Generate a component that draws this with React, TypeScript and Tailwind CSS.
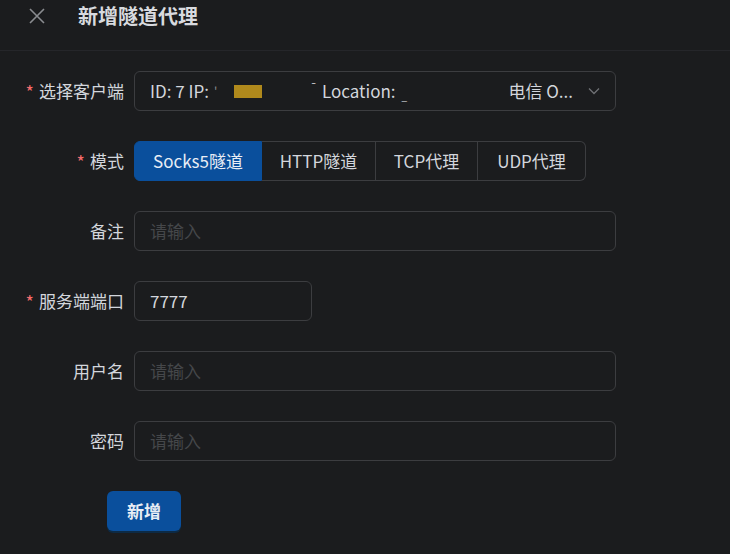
import React from "react";

const font = { fontFamily: '"Microsoft YaHei", "Noto Sans CJK SC", "Noto Sans", sans-serif' };

function Label({ text, required }: { text: string; required?: boolean }) {
  return (
    <div className="w-[134px] shrink-0 flex items-center justify-end pr-[10px] text-[17px] text-[#d3d6dc]">
      {required && <span className="text-[#f56c6c] mr-[5px] text-[18px]">*</span>}
      <span>{text}</span>
    </div>
  );
}

function Input({ placeholder, value, width }: { placeholder?: string; value?: string; width: string }) {
  return (
    <div className={`${width} h-[40px] rounded-[6px] border border-[#3c3d40] flex items-center px-[15px] text-[17px]`}>
      {value ? (
        <span className="text-[#d3d6dc]">{value}</span>
      ) : (
        <span className="text-[#45474a]">{placeholder}</span>
      )}
    </div>
  );
}

export default function App() {
  const modes = [
    { t: "Socks5隧道", w: "w-[128px]" },
    { t: "HTTP隧道", w: "w-[114px]" },
    { t: "TCP代理", w: "w-[102px]" },
    { t: "UDP代理", w: "w-[108px]" },
  ];
  return (
    <div className="w-[730px] h-[554px] bg-[#1b1c1e] overflow-hidden" style={font}>
      <div className="h-[51px] border-b border-[#25262a] flex items-start pt-[3px]">
        <svg width="18" height="18" viewBox="0 0 18 18" className="ml-[28px] mt-[4px]">
          <path d="M2 2 L16 16 M16 2 L2 16" stroke="#8a8c90" strokeWidth="1.6" />
        </svg>
        <div className="ml-[32px] text-[20px] font-bold text-[#d8dadf] leading-[26px]">新增隧道代理</div>
      </div>
      <div className="flex flex-col gap-[30px] pt-[20px]">
        <div className="flex h-[40px]">
          <Label text="选择客户端" required />
          <div className="w-[482px] h-[40px] rounded-[6px] border border-[#3c3d40] flex items-center pl-[15px] pr-[14px] text-[17px] text-[#d3d6dc]">
            <span className="whitespace-nowrap w-[64px] shrink-0">ID: 7 IP:</span>
            <span className="text-[#8a8c90] text-[12px] w-[20px] shrink-0">'</span>
            <span className="w-[28px] h-[13px] bg-[#b0891c] shrink-0" />
            <span className="ml-[48px] text-[#d3d6dc] text-[12px] -mt-[8px] w-[12px] shrink-0">¯</span>
            <span className="whitespace-nowrap">Location:</span>
            <span className="ml-[6px] text-[10px] mt-[8px]">_</span>
            <div className="flex-1" />
            <span className="whitespace-nowrap">电信 O...</span>
            <svg width="14" height="14" viewBox="0 0 14 14" className="ml-[14px]">
              <path d="M2 4.5 L7 9.5 L12 4.5" stroke="#6f7175" strokeWidth="1.3" fill="none" />
            </svg>
          </div>
        </div>
        <div className="flex h-[40px]">
          <Label text="模式" required />
          <div className="flex">
            {modes.map((m, i) => (
              <div
                key={m.t}
                className={`${m.w} h-[40px] flex items-center justify-center text-[17px] border ${
                  i === 0
                    ? "bg-[#0a4f9c] border-[#0a4f9c] text-[#e8edf5] rounded-l-[6px]"
                    : "border-[#3c3d40] border-l-0 text-[#d3d6dc]"
                } ${i === modes.length - 1 ? "rounded-r-[6px]" : ""}`}
              >
                {m.t}
              </div>
            ))}
          </div>
        </div>
        <div className="flex h-[40px]">
          <Label text="备注" />
          <Input placeholder="请输入" width="w-[482px]" />
        </div>
        <div className="flex h-[40px]">
          <Label text="服务端端口" required />
          <Input value="7777" width="w-[178px]" />
        </div>
        <div className="flex h-[40px]">
          <Label text="用户名" />
          <Input placeholder="请输入" width="w-[482px]" />
        </div>
        <div className="flex h-[40px]">
          <Label text="密码" />
          <Input placeholder="请输入" width="w-[482px]" />
        </div>
        <div className="pl-[107px]">
          <button className="w-[74px] h-[40px] rounded-[6px] bg-[#0a4f9c] text-[#e8edf5] text-[17px] font-bold shadow-[0_2px_0_#0d2a45]">
            新增
          </button>
        </div>
      </div>
    </div>
  );
}
